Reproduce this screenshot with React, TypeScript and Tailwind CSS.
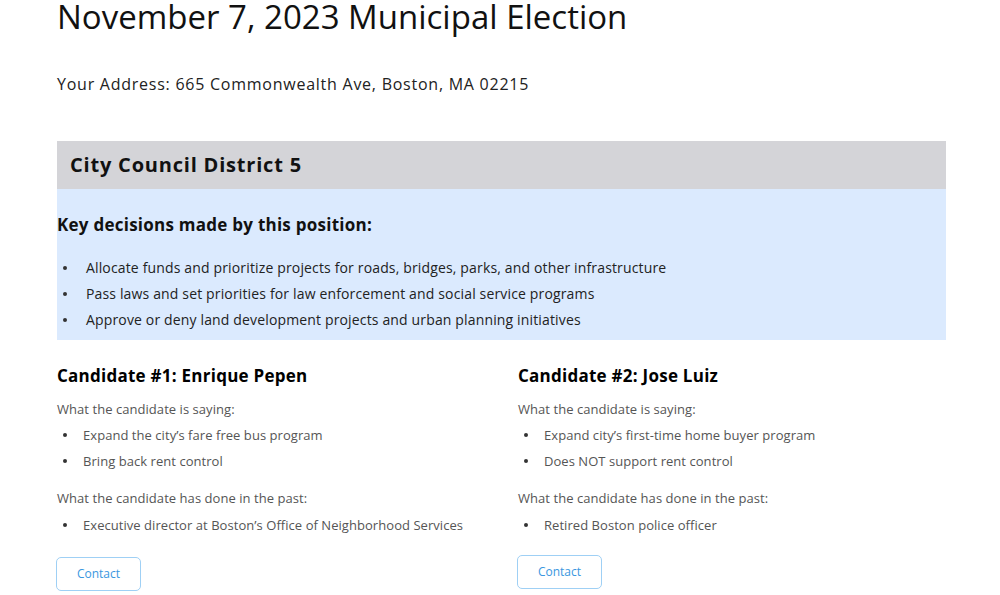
const keyDecisions = [
  'Allocate funds and prioritize projects for roads, bridges, parks, and other infrastructure',
  'Pass laws and set priorities for law enforcement and social service programs',
  'Approve or deny land development projects and urban planning initiatives',
]

const candidates = [
  {
    name: 'Candidate #1: Enrique Pepen',
    saying: ["Expand the city\u2019s fare free bus program", 'Bring back rent control'],
    past: ["Executive director at Boston\u2019s Office of Neighborhood Services"],
    buttonOffset: 'mt-[19px]',
  },
  {
    name: 'Candidate #2: Jose Luiz',
    saying: ["Expand city\u2019s first-time home buyer program", 'Does NOT support rent control'],
    past: ['Retired Boston police officer'],
    buttonOffset: 'mt-[17px]',
  },
]

type Candidate = (typeof candidates)[number]

function Bullet({ children, textGap }: { children: React.ReactNode; textGap: string }) {
  return (
    <li className="flex items-center">
      <span className={`ml-[6px] ${textGap} h-[4px] w-[4px] shrink-0 rounded-full bg-[#333]`} />
      <span>{children}</span>
    </li>
  )
}

function CandidateCard({ candidate }: { candidate: Candidate }) {
  return (
    <div className="flex flex-col items-start">
      <h3 className="text-[17px] leading-[24px] font-bold tracking-[0.25px] text-black">{candidate.name}</h3>
      <p className="mt-[11px] text-[13px] leading-[20px] tracking-[0.05px] text-[#555]">What the candidate is saying:</p>
      <ul className="mt-[3px] text-[13px] leading-[26px] tracking-[0.05px] text-[#555]">
        {candidate.saying.map(item => (
          <Bullet key={item} textGap="mr-[16px]">{item}</Bullet>
        ))}
      </ul>
      <p className="mt-[14px] text-[13px] leading-[20px] tracking-[0.05px] text-[#555]">
        What the candidate has done in the past:
      </p>
      <ul className="mt-[4px] text-[13px] leading-[26px] tracking-[0.05px] text-[#555]">
        {candidate.past.map(item => (
          <Bullet key={item} textGap="mr-[16px]">{item}</Bullet>
        ))}
      </ul>
      <button
        className={`${candidate.buttonOffset} -ml-[1px] w-[85px] h-[34px] rounded-[5px] border border-[#9fd0f5] bg-white text-[12px] text-[#3a97e0]`}
      >
        Contact
      </button>
    </div>
  )
}

export default function App() {
  return (
    <div
      className="min-h-[595px] bg-white pl-[57px] pr-[54px] text-[#1a1a1a]"
      style={{ fontFamily: '"Open Sans", "Noto Sans", sans-serif' }}
    >
      <h1 className="text-[33px] leading-[34px] font-normal text-[#111]">November 7, 2023 Municipal Election</h1>
      <p className="mt-[38px] text-[16px] leading-[24px] tracking-[0.75px] text-[#222]">
        Your Address: 665 Commonwealth Ave, Boston, MA 02215
      </p>

      <section className="mt-[45px]">
        <div className="h-[48px] flex items-center bg-[#d4d4d8] px-[13px]">
          <h2 className="text-[20px] leading-[28px] font-bold tracking-[0.8px] text-[#111]">City Council District 5</h2>
        </div>
        <div className="bg-[#dbeafe] pt-[24px] pb-[7px]">
          <h3 className="text-[17px] leading-[24px] font-bold tracking-[0.25px] text-[#111]">
            Key decisions made by this position:
          </h3>
          <ul className="mt-[18px] text-[14px] leading-[26px] tracking-[0.15px] text-[#222]">
            {keyDecisions.map(item => (
              <Bullet key={item} textGap="mr-[19px]">{item}</Bullet>
            ))}
          </ul>
        </div>
      </section>

      <div className="mt-[24px] grid grid-cols-[461px_1fr]">
        {candidates.map(candidate => (
          <CandidateCard key={candidate.name} candidate={candidate} />
        ))}
      </div>
    </div>
  )
}
